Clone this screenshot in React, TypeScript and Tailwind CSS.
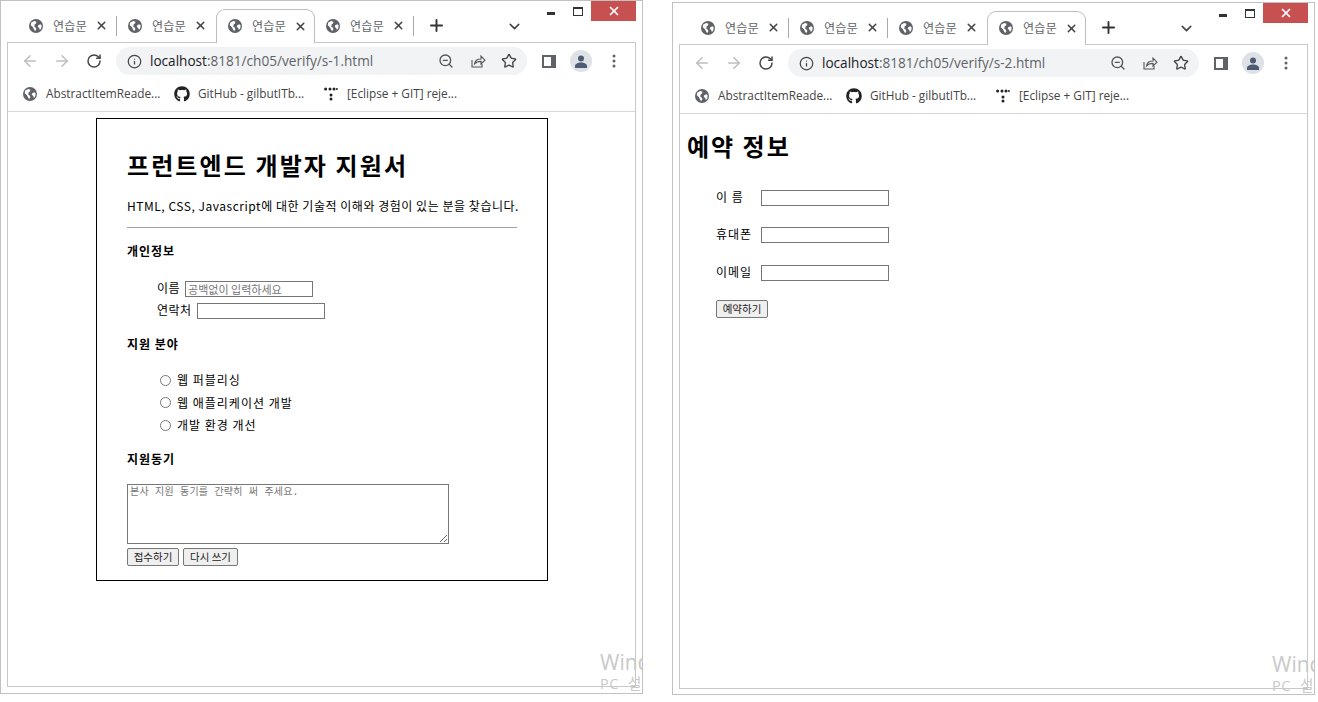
import type { ReactNode } from 'react'
import { ArrowLeft, ArrowRight, ChevronDown, Info, Plus, RotateCw, Star, X, ZoomOut } from 'lucide-react'
import { FaGithub } from 'react-icons/fa'

const uiFont = "font-['Noto_Sans_CJK_KR','Noto_Sans',sans-serif]"

function Globe({ size = 14 }: { size?: number }) {
  return (
    <svg width={size} height={size} viewBox="0 0 16 16" className="shrink-0">
      <circle cx="8" cy="8" r="8" fill="#5f6368" />
      <path d="M2.500 4 6 2.400 8.500 3.200 8 5 6.500 6 6.500 7.500 5.500 8 7.500 9.600 8.500 11.500 7 14 5.500 11.500 4.500 9.500 2 7Z" fill="#fff" />
      <path d="M10.500 7 13 6 14.500 7.500 14 10.500 12.500 12.500 11.500 10 10 9Z" fill="#fff" />
    </svg>
  )
}

function TabItem({ active, separator }: { active?: boolean; separator?: boolean }) {
  return (
    <div
      className={`relative -mb-px flex h-[34px] w-[99px] shrink-0 items-center pb-px pl-[11px] ${
        active ? 'z-10 rounded-t-[9px] border border-b-0 border-[#bdbdbd] bg-white pl-[10px]' : ''
      }`}
    >
      <Globe />
      <span className="ml-[10px] w-[34px] text-[12px] tracking-[0.300px] whitespace-nowrap text-[#5f6368]">
        연습문
      </span>
      <X size={13} strokeWidth={2.8} className="ml-[8px] shrink-0 text-[#444]" />
      {separator && <span className="absolute top-[7px] right-0 h-[20px] w-px bg-[#a8a8a8]" />}
    </div>
  )
}

function TabsRow({ activeTab }: { activeTab: number }) {
  return (
    <div className="relative z-10 flex h-[41px] items-end pl-[17px]">
      {[0, 1, 2, 3].map((i) => (
        <TabItem key={i} active={i === activeTab} separator={i !== activeTab && i + 1 !== activeTab} />
      ))}
      <Plus size={19} strokeWidth={2.4} className="mb-[7px] ml-[13px] text-[#333]" />
      <ChevronDown size={17} strokeWidth={2.2} className="mb-[7px] ml-[60px] text-[#444]" />
    </div>
  )
}

function WindowButtons() {
  return (
    <div className="absolute top-0 right-[6px] z-20 flex h-[20px] items-start">
      <span className="mt-[11px] mr-[18px] h-[3px] w-[8px] bg-[#333]" />
      <span className="mt-[6px] mr-[8px] h-[9px] w-[10px] border border-t-2 border-[#333]" />
      <div className="flex h-[20px] w-[45px] items-center justify-center bg-[#c75050]">
        <X size={14} strokeWidth={3} className="text-white" />
      </div>
    </div>
  )
}

function AddressBar({ url }: { url: string }) {
  return (
    <div className="flex h-[36px] items-center text-[#5f6368]">
      <ArrowLeft size={18} strokeWidth={2} className="ml-[13px] text-[#bdbdbd]" />
      <ArrowRight size={18} strokeWidth={2} className="ml-[14px] text-[#bdbdbd]" />
      <RotateCw size={16} strokeWidth={2.2} className="ml-[15px] text-[#444]" />
      <div className="ml-[14px] flex h-[28px] w-[411px] items-center rounded-full bg-[#f1f3f4] pl-[11px]">
        <Info size={15} strokeWidth={2} className="text-[#444]" />
        <span className="ml-[8px] w-[288px] font-['Open_Sans',sans-serif] text-[13.600px] text-[#5f6368]">
          <span className="text-[#202124]">localhost</span>
          {url}
        </span>
        <ZoomOut size={16} strokeWidth={2} className="text-[#555]" />
        <svg width="16" height="16" viewBox="0 0 16 16" fill="none" stroke="#555" strokeWidth="1.100" className="ml-[16px]">
          <path d="M2 7v7h10V11" />
          <path d="M4.500 11c.4-3 3-5 6.500-5V3l4 4.200L11 11V8.400c-2.800 0-5 .8-6.500 2.600Z" />
        </svg>
        <Star size={16} strokeWidth={2} className="ml-[15px] text-[#444]" />
      </div>
      <svg width="14" height="13" viewBox="0 0 14 13" className="ml-[15px]">
        <path fillRule="evenodd" d="M0 0h14v13H0ZM2 2v9h7V2Z" fill="#5f6368" />
      </svg>
      <div className="ml-[14px] flex h-[22px] w-[22px] items-center justify-center rounded-full bg-[#dee1e6]">
        <svg width="14" height="13" viewBox="0 0 14 13" fill="#4d5b73">
          <circle cx="7" cy="3.500" r="3" />
          <path d="M1 13v-2c0-2 3-3.500 6-3.500s6 1.500 6 3.500v2Z" />
        </svg>
      </div>
      <svg width="4" height="14" viewBox="0 0 4 14" fill="#5f6368" className="ml-[20px]">
        <circle cx="2" cy="2" r="1.500" />
        <circle cx="2" cy="7" r="1.500" />
        <circle cx="2" cy="12" r="1.500" />
      </svg>
    </div>
  )
}

function Bookmarks() {
  return (
    <div className="flex h-[32px] items-center pb-[3px] pl-[15px] font-['Open_Sans','Noto_Sans_CJK_KR',sans-serif] text-[11.800px] text-[#444]">
      <Globe />
      <span className="ml-[9px] w-[113px] whitespace-nowrap">AbstractItemReade...</span>
      <FaGithub size={16} className="ml-[15px] text-[#222]" />
      <span className="ml-[8px] w-[110px] whitespace-nowrap">GitHub - gilbutITb...</span>
      <svg width="14" height="14" viewBox="0 0 14 14" fill="#222" className="ml-[16px]">
        <circle cx="1.600" cy="2" r="1.500" />
        <circle cx="6" cy="2" r="1.500" />
        <circle cx="10" cy="2" r="1.500" />
        <circle cx="12.900" cy="2" r="1" />
        <circle cx="7" cy="8" r="1.500" />
        <circle cx="7" cy="12" r="1.500" />
      </svg>
      <span className="ml-[9px] whitespace-nowrap">[Eclipse + GIT] reje...</span>
    </div>
  )
}

function Watermark() {
  return (
    <div className="absolute top-[648px] left-[599px] font-['Open_Sans','Noto_Sans_CJK_KR',sans-serif] whitespace-nowrap text-[#c9c9c9]">
      <p className="text-[21px] leading-[26px]">Windows 정품</p>
      <p className="text-[14.500px] leading-[18px] tracking-[0.500px] [word-spacing:5px]">PC 설정으로 이동</p>
    </div>
  )
}

function BrowserWindow({
  url,
  activeTab,
  heightClass,
  children,
}: {
  url: string
  activeTab: number
  heightClass: string
  children: ReactNode
}) {
  return (
    <div className={`relative w-[643px] shrink-0 overflow-hidden border border-[#c2c2c2] bg-white ${heightClass} ${uiFont}`}>
      <TabsRow activeTab={activeTab} />
      <WindowButtons />
      <div className="mx-[6px] h-[645px] border border-[#c8c8c8]">
        <AddressBar url={url} />
        <Bookmarks />
        <div className="border-t border-[#d8d8d8]">{children}</div>
      </div>
      <Watermark />
    </div>
  )
}

const inputCls = 'h-[16px] w-[128px] border border-[#767676] bg-white px-[2px] text-[11px] placeholder:text-[#757575]'
const btnCls = 'h-[18px] rounded-[2px] border border-[#767676] bg-[#efefef] text-[10.500px] text-[#222]'
const pageText = "font-['Noto_Sans_CJK_KR',sans-serif] text-[12px] text-black"
const sectionTitle = 'leading-[18px] font-bold tracking-[1px]'

function ApplicationForm() {
  return (
    <div className={`mt-[6px] ml-[88px] h-[463px] w-[452px] border border-black px-[30px] ${pageText}`}>
      <h1 className="mt-[29px] text-[24px] leading-[34px] font-bold tracking-[2.100px]">프런트엔드 개발자 지원서</h1>
      <p className="mt-[15px] leading-[18px] tracking-[0.530px] whitespace-nowrap">
        HTML, CSS, Javascript에 대한 기술적 이해와 경험이 있는 분을 찾습니다.
      </p>
      <hr className="mt-[12px] border-t border-[#a0a0a0]" />
      <h3 className={`mt-[14px] ${sectionTitle}`}>개인정보</h3>
      <div className="mt-[21px] ml-[30px] flex h-[16px] items-center gap-[5px] tracking-[0.500px]">
        <span className="pb-[2px]">이름</span>
        <input className={`${inputCls} tracking-normal`} placeholder="공백없이 입력하세요" />
      </div>
      <div className="mt-[6px] ml-[30px] flex h-[16px] items-center gap-[5px] tracking-[0.500px]">
        <span className="pb-[2px]">연락처</span>
        <input className={inputCls} />
      </div>
      <h3 className={`mt-[16px] ${sectionTitle}`}>지원 분야</h3>
      <ul className="mt-[16px] ml-[33px] tracking-[1px]">
        {['웹 퍼블리싱', '웹 애플리케이션 개발', '개발 환경 개선'].map((label) => (
          <li key={label} className="flex h-[22.500px] items-center gap-[6px]">
            <input type="radio" name="field" className="m-0 h-[11px] w-[11px]" />
            {label}
          </li>
        ))}
      </ul>
      <h3 className={`mt-[13px] ${sectionTitle}`}>지원동기</h3>
      <textarea
        className="mt-[16px] block h-[60px] w-[322px] border border-[#767676] bg-white px-[2px] pt-[2px] font-['Liberation_Mono','Noto_Sans_CJK_KR',monospace] text-[10px] leading-[11px] tracking-[0.200px] placeholder:text-[#757575]"
        placeholder="본사 지원 동기를 간략히 써 주세요."
      />
      <div className="mt-[4px] flex gap-[4px]">
        <button className={`${btnCls} w-[52px]`}>접수하기</button>
        <button className={`${btnCls} w-[55px]`}>다시 쓰기</button>
      </div>
    </div>
  )
}

function ReservationForm() {
  return (
    <div className={`pl-[7px] ${pageText}`}>
      <h1 className="mt-[15px] text-[24px] leading-[34px] font-bold tracking-[2px]">예약 정보</h1>
      <div className="mt-[27px] ml-[29px]">
        {[
          { label: '이 름', gap: 'mb-[21px]' },
          { label: '휴대폰', gap: 'mb-[22px]' },
          { label: '이메일', gap: 'mb-[18px]' },
        ].map((row) => (
          <div key={row.label} className={`flex h-[16px] items-center ${row.gap}`}>
            <span className="w-[45px] pb-[2px] tracking-[1px]">{row.label}</span>
            <input className={inputCls} />
          </div>
        ))}
        <button className={`${btnCls} w-[52px]`}>예약하기</button>
      </div>
    </div>
  )
}

export default function App() {
  return (
    <div className="flex h-[702px] w-[1318px] items-start gap-[29px] overflow-hidden bg-white">
      <BrowserWindow url=":8181/ch05/verify/s-1.html" activeTab={2} heightClass="h-[694px]">
        <ApplicationForm />
      </BrowserWindow>
      <div className="mt-[2px]">
        <BrowserWindow url=":8181/ch05/verify/s-2.html" activeTab={3} heightClass="h-[693px]">
          <ReservationForm />
        </BrowserWindow>
      </div>
    </div>
  )
}
